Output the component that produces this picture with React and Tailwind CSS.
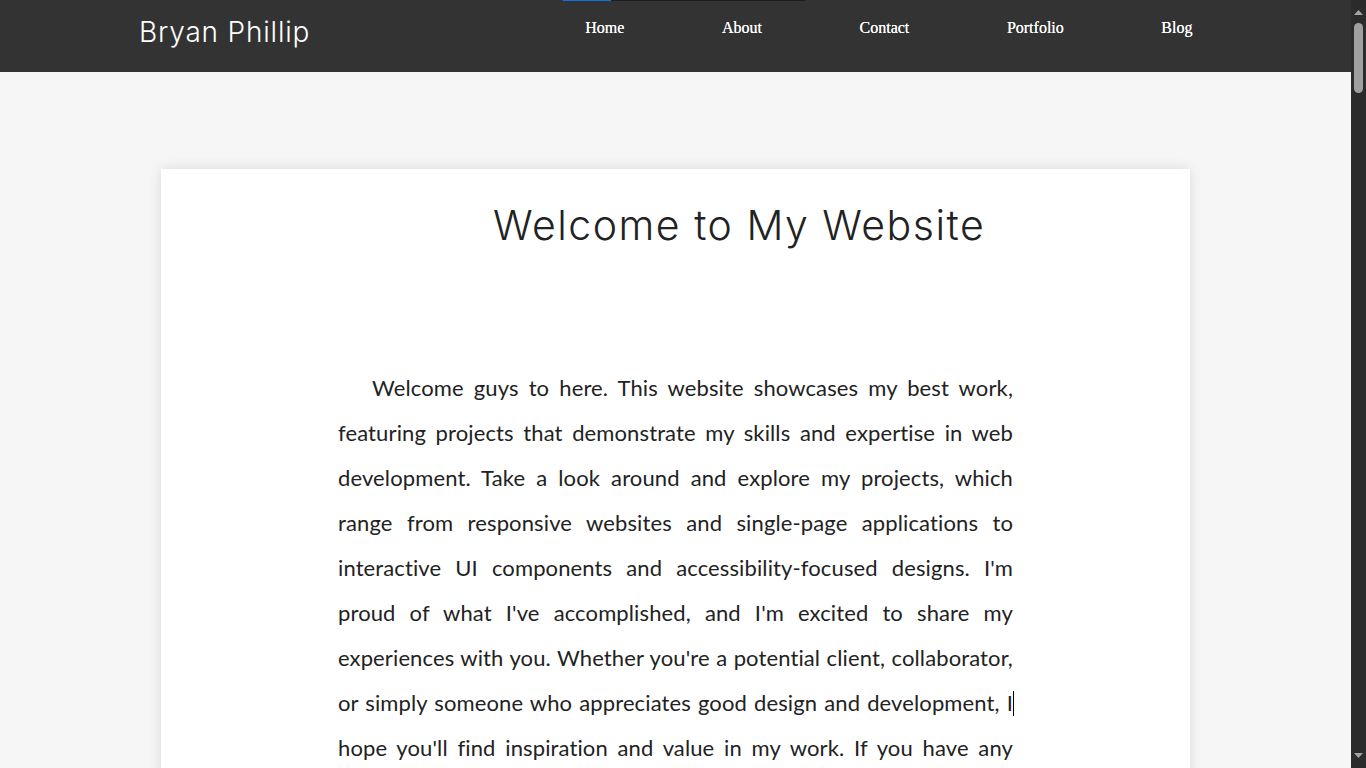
import React from "react";

function FakeScrollbar() {
  return (
    <div className="relative flex h-screen w-[15px] shrink-0 flex-col items-center bg-[#2b2b2b]">
      <svg className="mt-[10px]" width="9" height="5" viewBox="0 0 9 5">
        <polygon points="4.5,0 9,5 0,5" fill="#a3a3a3" />
      </svg>
      <div className="mt-[8px] h-[70px] w-[9px] rounded-full bg-[#9f9f9f]" />
      <div className="flex-1" />
      <svg className="mb-[10px]" width="9" height="5" viewBox="0 0 9 5">
        <polygon points="0,0 9,0 4.5,5" fill="#a3a3a3" />
      </svg>
    </div>
  );
}

export default function App() {
  return (
    <div className="flex h-screen w-full overflow-hidden bg-[#f6f6f6]">
      <div className="h-screen min-w-0 flex-1 overflow-hidden">
        <header className="relative h-[72px] w-full bg-[#333333]">
          <div className="absolute left-[563px] top-0 h-px w-[48px] bg-[#0a74da]" />
          <div className="absolute left-[611px] top-0 h-px w-[194px] bg-[#1e1e1e]" />
          <div className="flex h-full items-start">
            <div className="pl-[139px] pt-[14px] font-['Inter',sans-serif] text-[28px] font-light leading-[36px] tracking-[0.8px] text-white">
              Bryan Phillip
            </div>
            <nav className="ml-[275px] flex gap-[97.6px] pt-[17px] font-['Liberation_Serif',serif] text-[16px] leading-[22px] text-white [text-shadow:0_0_0.4px_#fff]">
              <a>Home</a>
              <a>About</a>
              <a>Contact</a>
              <a>Portfolio</a>
              <a>Blog</a>
            </nav>
          </div>
        </header>
        <main className="px-[161px] pt-[97px] pb-[60px]">
          <section className="w-[1029px] bg-white pt-[28px] pb-[60px] shadow-[0_0_12px_rgba(0,0,0,0.12)]">
            <h1 className="pl-[332px] font-['Inter',sans-serif] text-[41px] font-light leading-[56px] tracking-[1.5px] text-[#222]">
              Welcome to My Website
            </h1>
            <p className="mx-auto mt-[112px] w-[675px] text-justify indent-[34px] font-['Lato',sans-serif] text-[22px] leading-[45px] tracking-[0.12px] text-[#222]">
              Welcome guys to here. This website showcases my best work, featuring projects that demonstrate my skills and expertise in web development. Take a look around and explore my projects, which range from responsive websites and single-page applications to interactive UI components and accessibility-focused designs. I'm proud of what I've accomplished, and I'm excited to share my experiences with you. Whether you're a potential client, collaborator, or simply someone who appreciates good design and development,{" "}
              <span className="relative">
                I
                <span className="absolute -right-[1px] top-[2px] h-[25px] w-px bg-black" />
              </span>{" "}
              hope you'll find inspiration and value in my work. If you have any questions or would like to work together, please don't hesitate to get in touch. Thank you for visiting, and I look forward to connecting with you.
            </p>
          </section>
        </main>
      </div>
      <FakeScrollbar />
    </div>
  );
}
